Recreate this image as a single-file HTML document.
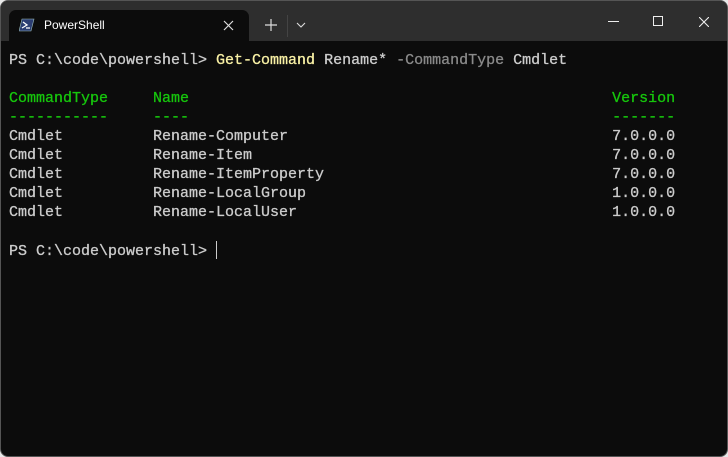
<!DOCTYPE html>
<html><head><style>
html,body{margin:0;padding:0;background:#e8e8e8;width:728px;height:457px;overflow:hidden}
.win{position:absolute;left:0;top:0;width:726px;height:455px;border:1px solid #555;border-radius:8px;background:#0c0c0c;overflow:hidden}
.tb{position:absolute;left:0;top:0;width:726px;height:40px;background:#2e2e2e}
.tab{position:absolute;left:8px;top:9px;width:240px;height:31px;background:#0c0c0c;border-radius:7px 7px 0 0}
.tab .t{position:absolute;left:35px;top:8px;font:12px "Liberation Sans",sans-serif;color:#fff}
.term{position:absolute;left:8px;top:50px;font:15px/19px "Liberation Mono",monospace;color:#cccccc;white-space:pre;letter-spacing:0;-webkit-text-stroke:0.3px currentColor}
.y{color:#f9f1a5}.g{color:#16c60c}.d{color:#8a8a8a}
.cur{display:inline-block;width:1px;height:18px;background:#ccc;vertical-align:-4px}
</style></head><body>
<div class="win">
<div class="tb">
<div class="tab">
<svg style="position:absolute;left:10px;top:8px" width="16" height="14" viewBox="0 0 16 14"><path d="M3 1h12l-3 12H0z" fill="#2c3e73" stroke="#9bb" stroke-width=".6"/><path d="M4 4l4 3-5 3" fill="none" stroke="#fff" stroke-width="1.3"/><path d="M7 10h4" stroke="#fff" stroke-width="1.2"/></svg>
<span class="t">PowerShell</span>
<svg style="position:absolute;left:214px;top:10px" width="11" height="11"><path d="M1 1l9 9M10 1l-9 9" stroke="#ddd" stroke-width="1.2"/></svg>
</div>
<svg style="position:absolute;left:264px;top:18px" width="12" height="12"><path d="M6 0v12M0 6h12" stroke="#ddd" stroke-width="1.2"/></svg>
<div style="position:absolute;left:286px;top:14px;width:1px;height:22px;background:#444"></div>
<svg style="position:absolute;left:295px;top:21px" width="10" height="6"><path d="M1 1l4 4 4-4" fill="none" stroke="#ddd" stroke-width="1.1"/></svg>
<div style="position:absolute;left:607px;top:20px;width:11px;height:1px;background:#eee"></div>
<div style="position:absolute;left:652px;top:15px;width:8px;height:8px;border:1px solid #eee"></div>
<svg style="position:absolute;left:698px;top:16px" width="10" height="10"><path d="M0 0l10 10M10 0l-10 10" stroke="#eee" stroke-width="1.1"/></svg>
</div>
<div class="term">PS C:\code\powershell> <span class="y">Get-Command</span> Rename* <span class="d">-CommandType</span> Cmdlet

<span class="g">CommandType     Name                                               Version</span>
<span class="g">-----------     ----                                               -------</span>
Cmdlet          Rename-Computer                                    7.0.0.0
Cmdlet          Rename-Item                                        7.0.0.0
Cmdlet          Rename-ItemProperty                                7.0.0.0
Cmdlet          Rename-LocalGroup                                  1.0.0.0
Cmdlet          Rename-LocalUser                                   1.0.0.0

PS C:\code\powershell> <span class="cur"></span></div>
</div>
</body></html>
